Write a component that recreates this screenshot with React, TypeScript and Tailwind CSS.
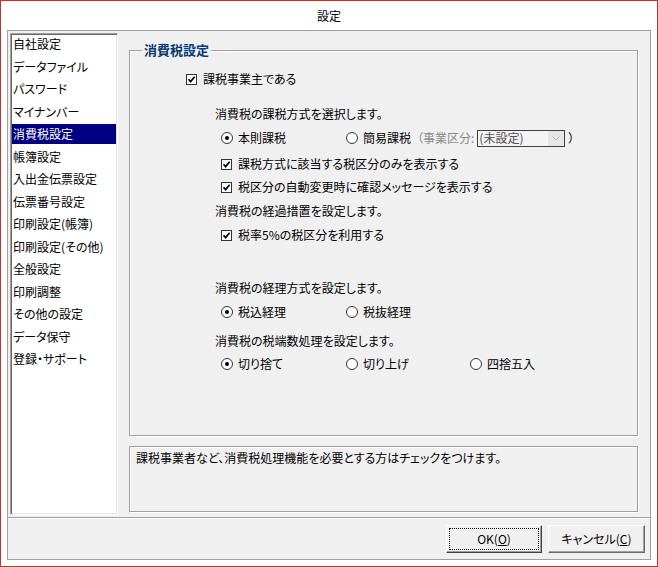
import React from "react";

const menuItems = [
  "自社設定",
  "データファイル",
  "パスワード",
  "マイナンバー",
  "消費税設定",
  "帳簿設定",
  "入出金伝票設定",
  "伝票番号設定",
  "印刷設定(帳簿)",
  "印刷設定(その他)",
  "全般設定",
  "印刷調整",
  "その他の設定",
  "データ保守",
  "登録・サポート",
];

const Check: React.FC = () => (
  <span className="w-[11px] h-[11px] border border-[#333] bg-white flex items-center justify-center shrink-0">
    <svg width="9" height="9" viewBox="0 0 9 9">
      <path d="M1.5 4.3 L3.6 6.6 L7.6 1.8" stroke="#000" strokeWidth="1.7" fill="none" />
    </svg>
  </span>
);

const Radio: React.FC<{ checked?: boolean }> = ({ checked }) => (
  <span className="w-[12px] h-[12px] rounded-full border border-[#333] bg-white flex items-center justify-center shrink-0">
    {checked && <span className="w-[4px] h-[4px] rounded-full bg-black" />}
  </span>
);

const RadioItem: React.FC<{ label: string; checked?: boolean; className?: string }> = ({
  label,
  checked,
  className = "w-[125px]",
}) => (
  <div className={`flex items-center gap-[5px] ${className}`}>
    <Radio checked={checked} />
    <span>{label}</span>
  </div>
);

const CheckRow: React.FC<{ label: string; className: string }> = ({ label, className }) => (
  <div className={`h-[20px] flex items-center gap-[6px] ${className}`}>
    <Check />
    <span>{label}</span>
  </div>
);

const Label: React.FC<{ text: string; className: string }> = ({ text, className }) => (
  <div className={`h-[20px] flex items-center pl-[85px] ${className}`}>{text}</div>
);

export default function App() {
  return (
    <div className="w-[658px] h-[567px] border border-[#aa3c3c] bg-white flex flex-col text-[12px] text-black font-['Noto_Sans_CJK_JP','Noto_Sans_CJK_SC',sans-serif] [font-feature-settings:'palt'] leading-none">
      {/* Title bar */}
      <div className="h-[29px] flex items-center justify-center">設定</div>

      <div className="flex-1 px-[6px] pb-[6px]">
        <div className="h-full border border-[#a0a0a0] bg-[#f0f0f0] flex flex-col">
          {/* Top section */}
          <div className="h-[486px] flex pl-[2px] pt-[2px]">
            {/* Menu list */}
            <div className="w-[108px] h-[482px] bg-white border border-t-[#a0a0a0] border-l-[#a0a0a0] border-r-white border-b-white shadow-[inset_1px_1px_0_#696969,inset_-1px_-1px_0_#e3e3e3] pl-[1px] pt-[0px]">
              {menuItems.map((item) => (
                <div key={item} className="h-[22.5px]">
                  <div
                    className={`h-[20px] flex items-center pl-[1px] mr-[1px] ${
                      item === "消費税設定" ? "bg-[#000080] text-white" : ""
                    }`}
                  >
                    {item}
                  </div>
                </div>
              ))}
            </div>

            {/* Right column */}
            <div className="ml-[11px] w-[509px] pt-[17px] flex flex-col">
              {/* Group box */}
              <div className="relative h-[386px] border border-[#a0a0a0] shadow-[inset_1px_1px_0_#fff,1px_1px_0_#fff]">
                <div className="absolute -top-[8px] left-[12px] px-[2px] bg-[#f0f0f0] text-[13px] font-bold text-[#0a3a6e] leading-[14px]">
                  消費税設定
                </div>

                <div className="flex flex-col pt-[18px]">
                  <CheckRow label="課税事業主である" className="pl-[56px]" />

                  <Label text="消費税の課税方式を選択します。" className="mt-[15px]" />
                  <div className="h-[20px] mt-[4px] flex items-center pl-[91px]">
                    <RadioItem label="本則課税" checked />
                    <div className="flex items-center gap-[5px]">
                      <Radio />
                      <span>簡易課税</span>
                      <span className="text-[#8a8a8a] ml-[1px]">（事業区分:</span>
                      <div className="w-[88px] h-[17px] border border-[#404040] bg-[#f4f4f4] flex items-center -ml-[2px]">
                        <span className="flex-1 pl-[1px] text-[#505050]">(未設定)</span>
                        <span className="w-[16px] h-[15px] bg-[#e6e6e6] flex items-center justify-center">
                          <svg width="8" height="5" viewBox="0 0 8 5">
                            <path d="M0.5 0.5 L4 4 L7.5 0.5" stroke="#b5b5b5" strokeWidth="1" fill="none" />
                          </svg>
                        </span>
                      </div>
                      <span className="-ml-[2px]">）</span>
                    </div>
                  </div>
                  <CheckRow label="課税方式に該当する税区分のみを表示する" className="pl-[91px] mt-[6px]" />
                  <CheckRow label="税区分の自動変更時に確認メッセージを表示する" className="pl-[91px] mt-[3px]" />

                  <Label text="消費税の経過措置を設定します。" className="mt-[4px]" />
                  <CheckRow label="税率5%の税区分を利用する" className="pl-[91px] mt-[4px]" />

                  <Label text="消費税の経理方式を設定します。" className="mt-[33px]" />
                  <div className="h-[20px] mt-[4px] flex items-center pl-[91px]">
                    <RadioItem label="税込経理" checked />
                    <RadioItem label="税抜経理" />
                  </div>

                  <Label text="消費税の税端数処理を設定します。" className="mt-[9px]" />
                  <div className="h-[20px] mt-[3px] flex items-center pl-[91px]">
                    <RadioItem label="切り捨て" checked />
                    <RadioItem label="切り上げ" className="w-[124px]" />
                    <RadioItem label="四捨五入" />
                  </div>
                </div>
              </div>

              {/* Description */}
              <div className="mt-[10px] h-[66px] border border-[#a0a0a0] shadow-[inset_1px_1px_0_#fff,1px_1px_0_#fff] px-[6px] pt-[5px]">
                課税事業者など、消費税処理機能を必要とする方はチェックをつけます。
              </div>
            </div>
          </div>

          {/* Separator */}
          <div className="h-[2px] border-t border-[#a0a0a0] border-b border-b-white" />

          {/* Buttons */}
          <div className="flex-1 flex justify-end items-start pt-[6px] pr-[5px] gap-[6px]">
            <button className="w-[96px] h-[28px] bg-[#f0f0f0] border border-t-white border-l-white border-r-[#404040] border-b-[#404040] shadow-[inset_-1px_-1px_0_#a0a0a0] p-[2px]">
              <span className="w-full h-full border border-dotted border-black flex items-center justify-center">
                OK(<span className="underline">O</span>)
              </span>
            </button>
            <button className="w-[97px] h-[28px] bg-[#f0f0f0] border border-t-white border-l-white border-r-[#696969] border-b-[#696969] shadow-[inset_-1px_-1px_0_#a0a0a0] flex items-center justify-center">
              キャンセル(<span className="underline">C</span>)
            </button>
          </div>
        </div>
      </div>
    </div>
  );
}
